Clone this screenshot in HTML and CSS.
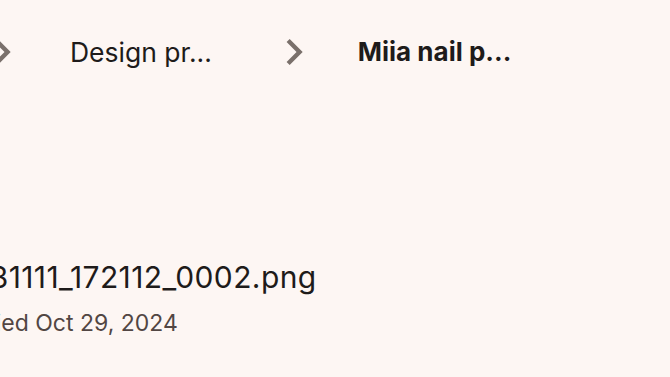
FILE: index.html
```html
<!DOCTYPE html>
<html>
<head>
<meta charset="utf-8">
<link rel="stylesheet" href="styles.css">
</head>
<body>
<div class="page">
  <nav class="crumbs">
    <svg class="chev chev-first" viewBox="0 0 24 24" width="52" height="52"><path d="M10 6 8.59 7.41 13.17 12l-4.58 4.59L10 18l6-6z"/></svg>
    <span class="crumb">Design pr...</span>
    <svg class="chev chev-next" viewBox="0 0 24 24" width="52" height="52"><path d="M10 6 8.59 7.41 13.17 12l-4.58 4.59L10 18l6-6z"/></svg>
    <span class="crumb current">Miia nail p...</span>
  </nav>
  <section class="file">
    <div class="name">20231111_172112_0002.png</div>
    <div class="meta">Modified Oct 29, 2024</div>
  </section>
</div>
</body>
</html>
```
FILE: styles.css
```css
html, body {
  margin: 0;
  padding: 0;
  background: #fdf6f3;
  overflow: hidden;
}
body {
  width: 670px;
  height: 377px;
  font-family: Inter, "Open Sans", sans-serif;
  color: #1e1b1a;
}
.page {
  display: flex;
  flex-direction: column;
}
.crumbs {
  display: flex;
  align-items: center;
  height: 52px;
  margin-top: 26px;
  white-space: nowrap;
}
.chev {
  flex: none;
  display: block;
  fill: #7a706b;
}
.chev-first {
  margin-left: -24px;
  margin-right: 42px;
}
.chev-next {
  margin-right: 38px;
}
.crumb {
  font-size: 26.5px;
  line-height: 32px;
  color: #1e1b1a;
  margin-right: 56px;
}
.crumb.current {
  font-weight: 700;
  font-size: 26px;
  margin-right: 0;
}
.file {
  margin-top: 181px;
  margin-left: -67px;
  white-space: nowrap;
}
.name {
  font-size: 30px;
  line-height: 36px;
  letter-spacing: 0.4px;
  color: #1e1b1a;
}
.meta {
  font-size: 23px;
  line-height: 28px;
  margin-top: 14px;
  color: #524643;
}
```
